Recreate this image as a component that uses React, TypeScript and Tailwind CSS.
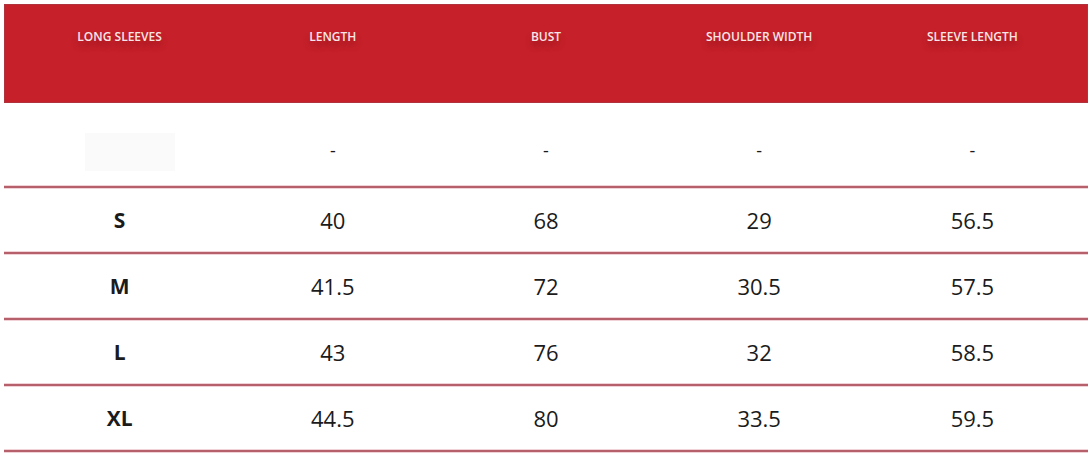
const headers = ["LONG SLEEVES", "LENGTH", "BUST", "SHOULDER WIDTH", "SLEEVE LENGTH"];

const rows: [string, string, string, string, string][] = [
  ["S", "40", "68", "29", "56.5"],
  ["M", "41.5", "72", "30.5", "57.5"],
  ["L", "43", "76", "32", "58.5"],
  ["XL", "44.5", "80", "33.5", "59.5"],
];

function Line() {
  return <div className="h-[2px] bg-[#b5606a] shadow-[0_-1px_0_#f1d2d6,0_1px_0_#f1d2d6]" />;
}

export default function App() {
  return (
    <div className="w-[1092px] h-[457px] bg-white pt-[4px] px-[4px] font-['Open_Sans','Liberation_Sans',sans-serif] text-[#1b1b1b]">
      <div className="h-[99px] bg-[#c6202a] border border-[#b0323b] grid grid-cols-5 px-[8px] pt-[24px]">
        {headers.map((h) => (
          <div
            key={h}
            className="text-center text-[12px] font-semibold text-[#f8e6e6] leading-[16px] [text-shadow:0_5px_6px_rgba(80,0,0,0.35)]"
          >
            {h}
          </div>
        ))}
      </div>

      <div className="h-[83px] grid grid-cols-5 px-[9px] items-center">
        <div className="flex justify-center pl-[20px] pt-[14px]">
          <div className="w-[90px] h-[38px] bg-[#fafafa]" />
        </div>
        {[0, 1, 2, 3].map((i) => (
          <div key={i} className="text-center text-[18px] leading-none pt-[10px]">
            -
          </div>
        ))}
      </div>
      <Line />

      {rows.map((r) => (
        <div key={r[0]}>
          <div className="h-[64px] grid grid-cols-5 px-[9px] items-center">
            {r.map((v, i) => (
              <div
                key={i}
                className={
                  i === 0
                    ? "text-center text-[21px] font-bold leading-none"
                    : "text-center text-[22px] leading-none"
                }
              >
                {v}
              </div>
            ))}
          </div>
          <Line />
        </div>
      ))}
    </div>
  );
}
